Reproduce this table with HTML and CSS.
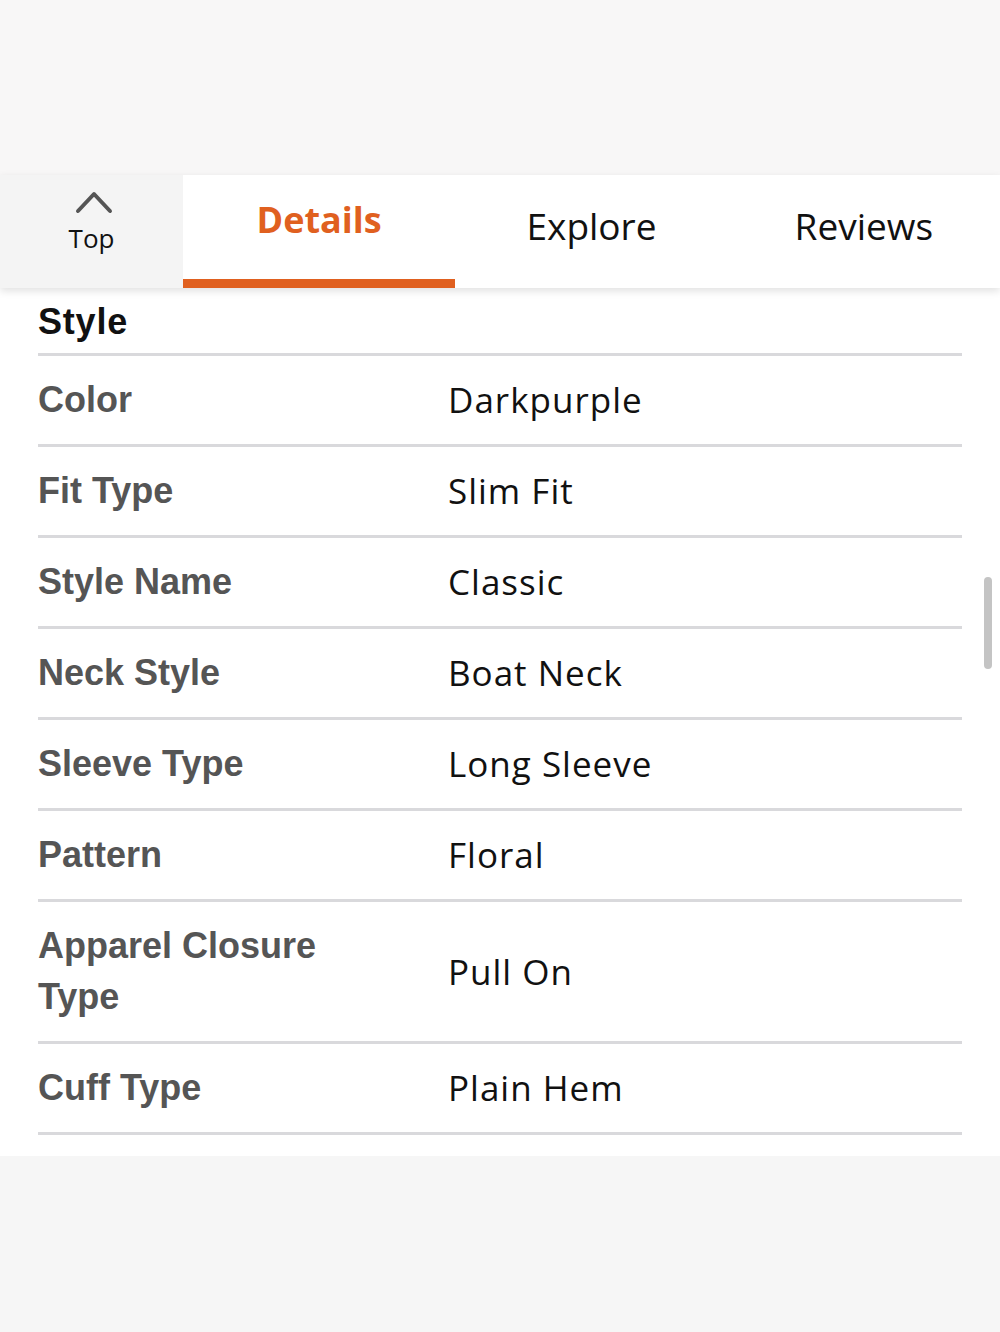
FILE: index.html
```html
<!DOCTYPE html>
<html lang="en">
<head>
<meta charset="utf-8">
<title>Details</title>
<link rel="stylesheet" href="styles.css">
</head>
<body>
<div class="top-band"></div>
<nav class="tabbar">
  <a class="top-btn" href="#">
    <svg class="chev" width="38" height="24" viewBox="0 0 38 24" aria-hidden="true">
      <path d="M3 21 L19 4 L35 21" fill="none" stroke="#555" stroke-width="4" stroke-linecap="round" stroke-linejoin="round"/>
    </svg>
    <span class="top-label">Top</span>
  </a>
  <a class="tab active" href="#">Details</a>
  <a class="tab" href="#">Explore</a>
  <a class="tab" href="#">Reviews</a>
</nav>
<main class="content">
  <h2 class="section-title">Style</h2>
  <div class="row"><div class="label">Color</div><div class="value">Darkpurple</div></div>
  <div class="row"><div class="label">Fit Type</div><div class="value">Slim Fit</div></div>
  <div class="row"><div class="label">Style Name</div><div class="value">Classic</div></div>
  <div class="row"><div class="label">Neck Style</div><div class="value">Boat Neck</div></div>
  <div class="row"><div class="label">Sleeve Type</div><div class="value">Long Sleeve</div></div>
  <div class="row"><div class="label">Pattern</div><div class="value">Floral</div></div>
  <div class="row"><div class="label">Apparel Closure<br>Type</div><div class="value">Pull On</div></div>
  <div class="row"><div class="label">Cuff Type</div><div class="value">Plain Hem</div></div>
  <div class="scrollbar"></div>
</main>
</body>
</html>
```
FILE: styles.css
```css
* { box-sizing: border-box; }
html, body { margin: 0; padding: 0; }
body {
  background: #f6f6f6;
  font-family: "Open Sans", "Liberation Sans", sans-serif;
  color: #111;
  width: 1000px;
  min-height: 1332px;
}
.top-band {
  height: 175px;
  background: #f8f7f7;
}
.tabbar {
  display: flex;
  height: 113px;
  position: relative;
  z-index: 2;
  box-shadow: 0 3px 8px rgba(0,0,0,0.12);
}
.top-btn {
  width: 183px;
  background: #f4f4f4;
  display: flex;
  flex-direction: column;
  align-items: center;
  justify-content: flex-start;
  padding-top: 15px;
  text-decoration: none;
  color: #111;
}
.chev { display: block; margin-left: 4px; }
.top-label {
  font-family: "Open Sans", sans-serif;
  font-size: 26px;
  line-height: 30px;
  margin-top: 9px;
}
.tab {
  flex: 1;
  background: #fff;
  display: flex;
  align-items: center;
  justify-content: center;
  text-decoration: none;
  color: #111;
  font-size: 37px;
  border-bottom: 9px solid transparent;
  padding-bottom: 4px;
}
.tab.active {
  color: #e0601f;
  font-weight: 700;
  font-size: 36px;
  border-bottom-color: #e0601f;
  padding-bottom: 16px;
}
.content {
  background: #fff;
  padding: 0 38px 21px;
  position: relative;
}
.section-title {
  margin: 0;
  padding: 8px 0 6px;
  font-family: "Liberation Sans", sans-serif;
  font-size: 36px;
  line-height: 51px;
  font-weight: 700;
  color: #111;
  letter-spacing: 0.8px;
  border-bottom: 3px solid #d9d9dc;
}
.row {
  display: flex;
  align-items: center;
  padding: 18px 0 19px;
  border-bottom: 3px solid #d9d9dc;
}
.label {
  width: 410px;
  flex: none;
  font-family: "Liberation Sans", sans-serif;
  font-weight: 700;
  font-size: 36px;
  line-height: 51px;
  color: #555;
}
.value {
  font-size: 35px;
  line-height: 51px;
  letter-spacing: 1px;
  color: #111;
}
.scrollbar {
  position: absolute;
  left: 984px;
  top: 289px;
  width: 8px;
  height: 92px;
  border-radius: 4px;
  background: #c4c4c4;
}
```
